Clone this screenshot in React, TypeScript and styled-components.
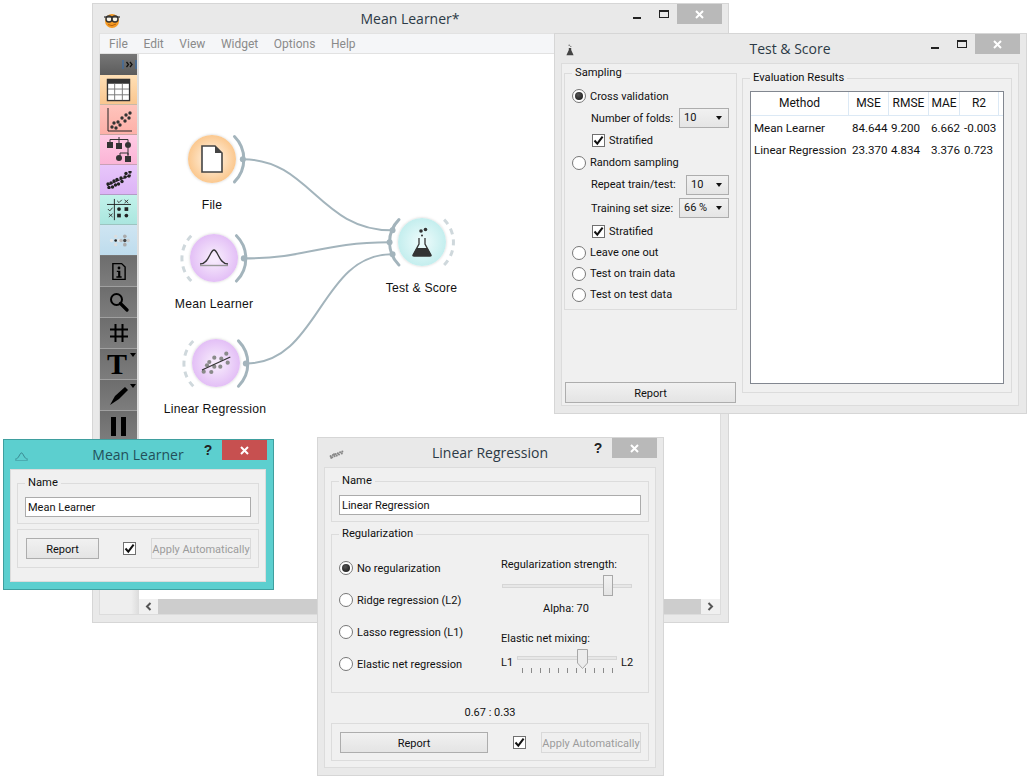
import React from "react";
import styled, { createGlobalStyle } from "styled-components";

const Global = createGlobalStyle`
  html, body { margin: 0; padding: 0; background: #fff; }
  body { width: 1030px; height: 779px; overflow: hidden; font-family: Roboto, "Open Sans", sans-serif; font-size: 11px; color: #111; }
  #root { position: relative; width: 1030px; height: 779px; }
`;

const Win = styled.div<{ $x: number; $y: number; $w: number; $h: number; $teal?: boolean }>`
  position: absolute;
  left: ${(p) => p.$x}px;
  top: ${(p) => p.$y}px;
  width: ${(p) => p.$w}px;
  height: ${(p) => p.$h}px;
  box-sizing: border-box;
  display: flex;
  flex-direction: column;
  padding: 0 7px 7px 6px;
  background: ${(p) => (p.$teal ? "#5ccfcf" : "#e9e9e9")};
  border: 1px solid ${(p) => (p.$teal ? "#3f9f9f" : "#d6d6d6")};
`;

const TitleBar = styled.div`
  height: 29px;
  flex: none;
  display: grid;
  grid-template-columns: 1fr auto 1fr;
`;
const TitleIcon = styled.div`
  display: flex;
  align-items: center;
  padding: 2px 0 0 5px;
`;
const TitleText = styled.div<{ $teal?: boolean }>`
  font-family: "Open Sans", sans-serif;
  font-size: 14px;
  line-height: 30px;
  color: ${(p) => (p.$teal ? "#23505a" : "#2c3a46")};
`;
const WinButtons = styled.div`
  display: flex;
  justify-content: flex-end;
  align-items: flex-start;
  margin-right: -1px;
`;
const MinBtn = styled.div`
  width: 8px;
  height: 2px;
  margin-top: 13px;
  margin-right: 18px;
  background: #222;
`;
const MaxBtn = styled.div`
  width: 10px;
  height: 8px;
  margin-top: 6px;
  margin-right: 8px;
  box-sizing: border-box;
  border: 1px solid #222;
  border-top-width: 2px;
`;
const HelpBtn = styled.div`
  font-family: "Liberation Sans", sans-serif;
  font-weight: 700;
  font-size: 14px;
  line-height: 14px;
  width: 10px;
  margin-top: 3px;
  margin-right: 9px;
  color: #222;
  text-align: center;
`;
const CloseBtn = styled.div<{ $red?: boolean }>`
  width: 45px;
  height: 20px;
  display: flex;
  align-items: center;
  justify-content: center;
  background: ${(p) => (p.$red ? "#c75050" : "#b9b9b9")};
`;

const Panel = styled.div`
  flex: 1;
  min-height: 0;
  box-sizing: border-box;
  background: #f0f0f0;
  border: 1px solid #dcdcdc;
`;
const PanelRow = styled(Panel)`
  display: flex;
  gap: 5px;
  padding: 2px 6px 2px 2px;
`;
const PanelCol = styled(Panel)`
  display: flex;
  flex-direction: column;
  padding: 6px 6px 0;
`;

const Group = styled.fieldset<{ $h: number; $mt?: number; $pad?: string }>`
  margin: ${(p) => p.$mt ?? 0}px 0 0;
  min-width: 0;
  height: ${(p) => p.$h}px;
  box-sizing: border-box;
  flex: none;
  padding: ${(p) => p.$pad ?? "7px"};
  border: 1px solid #dcdcdc;
  display: flex;
  flex-direction: column;
`;
const Legend = styled.legend`
  padding: 0 3px;
  height: 14px;
  line-height: 14px;
  font-size: 11.2px;
`;
const PlainBox = styled.div<{ $h: number; $mt: number }>`
  height: ${(p) => p.$h}px;
  margin-top: ${(p) => p.$mt}px;
  box-sizing: border-box;
  flex: none;
  border: 1px solid #dcdcdc;
  padding: 0 8px;
  display: flex;
  align-items: center;
`;

const TextInput = styled.div`
  height: 20px;
  box-sizing: border-box;
  border: 1px solid #ababab;
  background: #fff;
  padding-left: 2px;
  line-height: 20px;
  flex: none;
`;
const Button = styled.div<{ $w: number; $ml?: number }>`
  width: ${(p) => p.$w}px;
  height: 21px;
  flex: none;
  margin-left: ${(p) => p.$ml ?? 0}px;
  box-sizing: border-box;
  border: 1px solid #adadad;
  background: linear-gradient(#f1f1f1, #e4e4e4);
  text-align: center;
  line-height: 21px;
  white-space: nowrap;
`;
const DisabledButton = styled(Button)`
  border-color: #d9d9d9;
  background: #efefef;
  color: #9c9c9c;
`;

const CheckBox = styled.div<{ $ml?: number }>`
  width: 13px;
  height: 13px;
  flex: none;
  margin-left: ${(p) => p.$ml ?? 0}px;
  box-sizing: border-box;
  border: 1px solid #707070;
  background: #fff;
  display: flex;
  align-items: center;
  justify-content: center;
`;
const Check = ({ ml }: { ml?: number }) => (
  <CheckBox $ml={ml}>
    <svg width="11" height="11" viewBox="0 0 11 11">
      <path d="M1.5 5.5 L4.3 8.6 L9.6 1.6" fill="none" stroke="#111" strokeWidth="2" />
    </svg>
  </CheckBox>
);

const RadioCircle = styled.div<{ $on?: boolean }>`
  width: 14px;
  height: 14px;
  flex: none;
  box-sizing: border-box;
  border-radius: 50%;
  border: 1px solid #777;
  background: #fff;
  display: flex;
  align-items: center;
  justify-content: center;
  &::after {
    content: "";
    display: ${(p) => (p.$on ? "block" : "none")};
    width: 8px;
    height: 8px;
    border-radius: 50%;
    background: radial-gradient(circle at 40% 35%, #555, #111);
  }
`;
const Row = styled.div<{ $h: number; $ml?: number; $gap?: number; $between?: boolean }>`
  height: ${(p) => p.$h}px;
  flex: none;
  box-sizing: border-box;
  padding-top: 2px;
  margin-left: ${(p) => p.$ml ?? 0}px;
  display: flex;
  align-items: center;
  white-space: nowrap;
  gap: ${(p) => p.$gap ?? 4}px;
  justify-content: ${(p) => (p.$between ? "space-between" : "flex-start")};
`;
const Radio = ({ h, on, children, gap }: { h: number; on?: boolean; children: React.ReactNode; gap?: number }) => (
  <Row $h={h} $gap={gap ?? 4}>
    <RadioCircle $on={on} />
    <span>{children}</span>
  </Row>
);

const ComboBox = styled.div<{ $w: number }>`
  width: ${(p) => p.$w}px;
  height: 20px;
  flex: none;
  box-sizing: border-box;
  border: 1px solid #adadad;
  background: linear-gradient(#f1f1f1, #e5e5e5);
  padding-left: 4px;
  line-height: 18px;
  position: relative;
  &::after {
    content: "";
    position: absolute;
    right: 6px;
    top: 7px;
    border-style: solid;
    border-width: 4px 3.5px 0;
    border-color: #111 transparent transparent;
  }
`;

const LeftCol = styled.div`
  width: 173px;
  flex: none;
  display: flex;
  flex-direction: column;
  justify-content: space-between;
`;
const RightCol = styled.div`
  flex: 1;
  min-width: 0;
  padding-top: 5px;
`;
const ResultsTable = styled.div`
  flex: 1;
  box-sizing: border-box;
  border: 1px solid #828790;
  background: #fff;
`;
const TableGrid = styled.div`
  display: grid;
  grid-template-columns: 98px 40px 40px 31px 39px;
`;
const HeaderStrip = styled(TableGrid)`
  height: 23px;
  border-bottom: 1px solid #dce9f5;
  margin-bottom: 1px;
`;
const HeadCell = styled.div`
  box-sizing: border-box;
  border-right: 1px solid #dce9f5;
  text-align: center;
  line-height: 23px;
  font-size: 12px;
`;
const Cell = styled.div<{ $pl: number }>`
  padding-left: ${(p) => p.$pl}px;
  height: 22px;
  line-height: 22px;
  white-space: nowrap;
  font-size: 11.6px;
`;

/* main window */
const MenuBar = styled.div`
  height: 21px;
  flex: none;
  display: flex;
  align-items: center;
  gap: 15.6px;
  padding-left: 9px;
  background: #f5f6f8;
  border: 1px solid #e2e2e2;
  box-sizing: border-box;
  color: #8a8a8a;
  font-size: 12px;
`;
const MainBody = styled.div`
  flex: 1;
  min-height: 0;
  display: flex;
  border-left: 1px solid #dcdcdc;
  border-right: 1px solid #dcdcdc;
  border-bottom: 1px solid #dcdcdc;
`;
const Dock = styled.div`
  width: 39px;
  flex: none;
  box-sizing: border-box;
  display: flex;
  flex-direction: column;
  background: linear-gradient(90deg, #eeeeee 80%, #dcdcdc);
  padding-right: 2px;
`;
const DockHead = styled.div`
  height: 21px;
  flex: none;
  background: linear-gradient(#777, #5c5c5c);
  display: flex;
  justify-content: flex-end;
`;
const Tool = styled.div<{ $top: string; $bottom: string; $h: number; $line: string }>`
  height: ${(p) => p.$h}px;
  flex: none;
  box-sizing: border-box;
  display: flex;
  align-items: center;
  justify-content: center;
  background: linear-gradient(${(p) => p.$top}, ${(p) => p.$bottom});
  border-bottom: 1px solid ${(p) => p.$line};
`;
const CanvasCol = styled.div`
  flex: 1;
  min-width: 0;
  display: flex;
  flex-direction: column;
`;
const Canvas = styled.div`
  flex: 1;
  min-height: 0;
  position: relative;
  background: #fff;
`;
const Links = styled.svg`
  position: absolute;
  inset: 0;
  width: 100%;
  height: 100%;
`;
const HScroll = styled.div`
  height: 15px;
  flex: none;
  display: flex;
  background: #f0f0f0;
`;
const ScrollArrow = styled.div`
  width: 19px;
  flex: none;
  display: flex;
  align-items: center;
  justify-content: center;
`;
const ScrollThumb = styled.div`
  flex: 1;
  background: #cdcdcd;
`;

const Node = styled.div<{ $cx: number; $cy: number }>`
  position: absolute;
  left: ${(p) => p.$cx - 139 - 70}px;
  top: ${(p) => p.$cy - 55 - 24}px;
  width: 140px;
  display: flex;
  flex-direction: column;
  align-items: center;
`;
const NodeDisc = styled.div<{ $inner: string; $outer: string }>`
  width: 48px;
  height: 48px;
  border-radius: 50%;
  display: flex;
  align-items: center;
  justify-content: center;
  background: radial-gradient(circle closest-side, ${(p) => p.$inner} 15%, ${(p) => p.$outer} 100%);
  box-shadow: 0 0 2px 1px rgba(120, 120, 120, 0.18);
`;
const NodeLabel = styled.div<{ $dx?: number }>`
  margin-top: 15px;
  margin-left: ${(p) => p.$dx ?? 0}px;
  font-family: "Liberation Sans", Arial, sans-serif;
  font-size: 12.2px;
  letter-spacing: 0.2px;
  line-height: 15px;
  white-space: nowrap;
  color: #111;
`;

/* Linear Regression window */
const RegColumns = styled.div`
  display: flex;
  padding-top: 4px;
`;
const RadioStack = styled.div`
  width: 162px;
  flex: none;
  padding-top: 6px;
`;
const SliderStack = styled.div`
  flex: 1;
  padding-top: 13px;
`;
const Caption = styled.div<{ $mt?: number; $center?: boolean }>`
  line-height: 14px;
  height: 14px;
  white-space: nowrap;
  margin-top: ${(p) => p.$mt ?? 0}px;
  text-align: ${(p) => (p.$center ? "center" : "left")};
`;
const CaptionBlock = styled(Caption)`
  width: 130px;
`;
const SliderBox = styled.div<{ $w: number; $mt: number; $ml?: number }>`
  position: relative;
  width: ${(p) => p.$w}px;
  height: 21px;
  margin-top: ${(p) => p.$mt}px;
  margin-left: ${(p) => p.$ml ?? 0}px;
  flex: none;
  display: flex;
  align-items: center;
`;
const Track = styled.div`
  width: 100%;
  height: 4px;
  box-sizing: border-box;
  border: 1px solid #d6d6d6;
  background: #e7e7e7;
`;
const Handle = styled.div<{ $l: number }>`
  position: absolute;
  left: ${(p) => p.$l}px;
  top: 0;
  width: 10px;
  height: 21px;
  box-sizing: border-box;
  border: 1px solid #a8a8a8;
  background: linear-gradient(#f2f2f2, #e4e4e4);
`;
const MixRow = styled.div`
  display: flex;
  align-items: flex-start;
  margin-top: 3px;
  height: 26px;
`;
const MixLabel = styled.span<{ $ml?: number }>`
  width: ${(p) => (p.$ml ? "auto" : "16px")};
  margin-left: ${(p) => p.$ml ?? 0}px;
  margin-top: 7px;
  line-height: 14px;
`;
const MixSlider = styled.div`
  position: relative;
  width: 100px;
  height: 26px;
  flex: none;
`;
const MixTrack = styled.div`
  position: absolute;
  left: 0;
  right: 0;
  top: 7px;
  height: 4px;
  box-sizing: border-box;
  border: 1px solid #d6d6d6;
  background: #e7e7e7;
`;
const MixHandle = styled.svg`
  position: absolute;
  left: 60px;
  top: 0;
`;
const Ticks = styled.div`
  position: absolute;
  left: 5px;
  top: 19px;
  width: 91px;
  display: flex;
  justify-content: space-between;
`;
const Tick = styled.div`
  width: 1px;
  height: 5px;
  background: #8a8a8a;
`;

const X = () => (
  <svg width="11" height="11" viewBox="0 0 11 11">
    <path d="M2 2 L9 9 M9 2 L2 9" stroke="#fff" strokeWidth="2" />
  </svg>
);

const SmallGauss = ({ c = "#356" }: { c?: string }) => (
  <svg width="13" height="9" viewBox="0 0 14 10">
    <path d="M0 8 C4 8 5 1 7 1 C9 1 10 8 14 8" fill="none" stroke={c} strokeWidth="1" />
    <path d="M0 9.5 H14" stroke={c} strokeWidth="1" opacity=".5" />
  </svg>
);
const SmallFlask = () => (
  <svg width="8" height="14" viewBox="0 0 10 15">
    <circle cx="4" cy="1.5" r="1" fill="#777" />
    <circle cx="6" cy="3" r=".8" fill="#777" />
    <path d="M3.5 5 H6.5 V7.5 L9.5 14 H.5 L3.5 7.5 Z" fill="#444" />
  </svg>
);
const scatterDots: [number, number][] = [
  [3, 11], [6, 13], [7, 9], [10, 11], [12, 7], [14, 10], [16, 6], [18, 8], [20, 4], [23, 6], [24, 2.5], [4, 14], [9, 7.5],
];
const SmallReg = () => (
  <svg width="15" height="9" viewBox="0 0 27 16">
    {scatterDots.map(([x, y], i) => (
      <circle key={i} cx={x} cy={y} r="1.9" fill="#888" />
    ))}
  </svg>
);
const OrangeLogo = () => (
  <svg width="16" height="15" viewBox="0 0 16 15">
    <circle cx="8" cy="8" r="7" fill="#f59a23" />
    <path d="M4 11.5 Q8 14 12 11" stroke="#b8620c" fill="none" />
    <circle cx="5" cy="6" r="3" fill="#f8f4e8" stroke="#333" strokeWidth="1.4" />
    <circle cx="11" cy="6" r="3" fill="#f8f4e8" stroke="#333" strokeWidth="1.4" />
    <path d="M0 4 H16" stroke="#333" strokeWidth="1.2" />
  </svg>
);

const TableIcon = () => (
  <svg width="25" height="24" viewBox="0 0 26 25">
    <rect x="1.5" y="1.5" width="23" height="22" fill="#fff" stroke="#333" strokeWidth="1.4" />
    <rect x="1" y="1" width="24" height="5" fill="#333" />
    <path d="M9 6 V23 M17 6 V23 M2 11.5 H24 M2 17.5 H24" stroke="#777" strokeWidth="1" />
  </svg>
);
const ScatterIcon = () => (
  <svg width="26" height="26" viewBox="0 0 26 26">
    <path d="M2 1 V24 H26" fill="none" stroke="#222" strokeWidth="1" />
    {[[6, 20], [10, 21], [8, 16], [12, 15], [14, 18], [16, 11], [19, 14], [20, 8], [24, 6], [23, 11]].map(([x, y], i) => (
      <circle key={i} cx={x} cy={y} r="1.7" fill="#333" />
    ))}
  </svg>
);
const TreeIcon = () => (
  <svg width="26" height="27" viewBox="0 0 26 27">
    <path d="M4 6 V3.5 H22 V6 M13 1 V8 M22 12 V19 M14 17 H22 V21 M14 17 V20" fill="none" stroke="#333" />
    <rect x="1" y="6" width="6" height="6" fill="#333" />
    <rect x="10" y="7" width="6" height="6" fill="#333" />
    <circle cx="22" cy="9" r="3" fill="#333" />
    <circle cx="13" cy="22" r="3" fill="#333" />
    <rect x="19" y="20" width="6" height="6" fill="#333" />
  </svg>
);
const RegIcon = () => (
  <svg width="26" height="18" viewBox="0 0 26 18">
    {[[2, 13], [3, 16.5], [5, 12], [6.5, 16], [8, 10], [9.5, 14], [11, 8.5], [12.5, 13], [15, 7], [16, 10.5], [19, 6], [20, 2.5], [23, 5], [24, 1]].map(([x, y], i) => (
      <circle key={i} cx={x} cy={y} r="1.7" fill="#222" />
    ))}
    <path d="M1 14.5 L25 4" stroke="#222" strokeWidth="1" />
  </svg>
);
const GridIcon = () => (
  <svg width="24" height="24" viewBox="0 0 26 24">
    <path d="M8 0 V23 M0 6 H26" stroke="#222" strokeWidth="1" />
    <path d="M11 2 L13 4 L16 1" stroke="#333" fill="none" />
    <path d="M19 1 L23 4.5 M23 1 L19 4.5" stroke="#333" />
    <path d="M1 11 L3 13 L6 9.5" stroke="#333" fill="none" />
    <path d="M2 16 L6 19.5 M6 16 L2 19.5" stroke="#333" />
    <circle cx="13" cy="11" r="2" fill="#222" />
    <rect x="19" y="9" width="4" height="4" fill="#222" />
    <rect x="11" y="16" width="4" height="4" fill="#222" />
    <circle cx="21" cy="18" r="2" fill="#222" />
  </svg>
);
const BlurDots = () => (
  <svg width="22" height="15" viewBox="0 0 26 18">
    <circle cx="9" cy="4" r="2" fill="#ddd" />
    <circle cx="4" cy="9" r="2" fill="#e6e6e6" />
    <circle cx="13" cy="9" r="2" fill="#e6e6e6" />
    <circle cx="9" cy="14" r="2" fill="#ddd" />
    <circle cx="9" cy="9" r="1.6" fill="#222" />
    <circle cx="20" cy="4" r="2.2" fill="#aaa" />
    <circle cx="15.5" cy="9" r="2.2" fill="#bbb" />
    <circle cx="24" cy="9" r="2" fill="#ccc" />
    <circle cx="20" cy="14" r="2.2" fill="#aaa" />
    <circle cx="20" cy="9" r="2" fill="#444" />
  </svg>
);
const InfoIcon = () => (
  <svg width="14" height="19" viewBox="0 0 16 20">
    <path d="M1 1 H11 L15 5 V19 H1 Z" fill="none" stroke="#000" strokeWidth="1.6" />
    <circle cx="8" cy="6" r="1.6" fill="#000" />
    <path d="M5.5 9 H9.5 V15.5 H11 V17 H5 V15.5 H7 V10.5 H5.5 Z" fill="#000" />
  </svg>
);
const LensIcon = () => (
  <svg width="20" height="20" viewBox="0 0 20 20">
    <circle cx="7.5" cy="7.5" r="5.5" fill="none" stroke="#000" strokeWidth="2" />
    <path d="M11.5 11.5 L18 18" stroke="#000" strokeWidth="3.2" strokeLinecap="round" />
  </svg>
);
const HashIcon = () => (
  <svg width="18" height="18" viewBox="0 0 18 18">
    <path d="M5.5 0 V18 M12.5 0 V18 M0 5.5 H18 M0 12.5 H18" stroke="#000" strokeWidth="2" />
  </svg>
);
const Caret = styled.div`
  position: absolute;
  right: 1px;
  top: 4px;
  border-style: solid;
  border-width: 4px 3.5px 0;
  border-color: #000 transparent transparent;
`;
const ToolInner = styled.div`
  position: relative;
  width: 100%;
  height: 100%;
  display: flex;
  align-items: center;
  justify-content: center;
`;
const BigT = styled.span`
  font-family: "Liberation Serif", serif;
  font-weight: 700;
  font-size: 30px;
  line-height: 30px;
  color: #000;
  margin-right: 3px;
`;
const PenIcon = () => (
  <svg width="20" height="22" viewBox="0 0 20 22">
    <path d="M16 3 L19 6 L10 15 L1 21 L6 12 Z" fill="#000" />
  </svg>
);
const PauseIcon = () => (
  <svg width="16" height="19" viewBox="0 0 16 19">
    <rect x="0" y="0" width="5" height="19" fill="#000" />
    <rect x="10" y="0" width="5" height="19" fill="#000" />
  </svg>
);

const tools = [
  { t: "#ffe0b6", b: "#f9c68f", l: "#c9b9a5", h: 30, i: <TableIcon /> },
  { t: "#ffc4bc", b: "#fdb0a8", l: "#c9a5a0", h: 30, i: <ScatterIcon /> },
  { t: "#ffcbe4", b: "#fbb4d6", l: "#c9a0b6", h: 30, i: <TreeIcon /> },
  { t: "#e8c6fb", b: "#dcb4f6", l: "#b49ac6", h: 30, i: <RegIcon /> },
  { t: "#c2f2ea", b: "#aae6df", l: "#9cc4c0", h: 30, i: <GridIcon /> },
  { t: "#cfe5f2", b: "#bedced", l: "#777", h: 31, i: <BlurDots /> },
  { t: "#6d6d6d", b: "#7d7d7d", l: "#a0a0a0", h: 31, i: <InfoIcon /> },
  { t: "#6d6d6d", b: "#7d7d7d", l: "#a0a0a0", h: 31, i: <LensIcon /> },
  { t: "#6d6d6d", b: "#7d7d7d", l: "#a0a0a0", h: 31, i: <HashIcon /> },
  { t: "#6d6d6d", b: "#7d7d7d", l: "#a0a0a0", h: 31, i: <ToolInner><BigT>T</BigT><Caret /></ToolInner> },
  { t: "#6d6d6d", b: "#7d7d7d", l: "#a0a0a0", h: 31, i: <ToolInner><PenIcon /><Caret /></ToolInner> },
  { t: "#6d6d6d", b: "#7d7d7d", l: "#a0a0a0", h: 31, i: <PauseIcon /> },
];

const STEEL = "#a3b4bc";
const FAINT = "#cfd8dc";

const arc = (cx: number, cy: number, r: number, from: number, to: number) => {
  const a = (from * Math.PI) / 180;
  const b = (to * Math.PI) / 180;
  return `M${cx + r * Math.cos(a)} ${cy + r * Math.sin(a)} A${r} ${r} 0 0 1 ${cx + r * Math.cos(b)} ${cy + r * Math.sin(b)}`;
};

const CanvasLinks = () => (
  <Links viewBox="139 55 582 544" preserveAspectRatio="none">
    <g fill="none" stroke={STEEL} strokeWidth="2">
      <path d="M243 160 C310 160 320 231 392 231" />
      <path d="M244 259 C310 259 320 243 390 243" />
      <path d="M246 364 C320 364 320 255 392 255" />
    </g>
    <g fill="none" stroke={STEEL} strokeWidth="3" strokeLinecap="round">
      <path d={arc(212, 160, 32, -45, 45)} />
      <path d={arc(214, 259, 32, -45, 45)} />
      <path d={arc(216, 364, 32, -45, 45)} />
      <path d={arc(422, 243, 32, 135, 225)} />
    </g>
    <g fill={STEEL}>
      <circle cx="243" cy="160" r="3" />
      <circle cx="244" cy="259" r="3" />
      <circle cx="246" cy="364" r="3" />
      <circle cx="393" cy="231" r="3" />
      <circle cx="390" cy="243" r="3" />
      <circle cx="393" cy="255" r="3" />
    </g>
    <g fill="none" stroke={FAINT} strokeWidth="3" strokeDasharray="6 5">
      <path d={arc(214, 259, 32, 135, 225)} />
      <path d={arc(216, 364, 32, 135, 225)} />
      <path d={arc(422, 243, 32, -45, 45)} />
    </g>
  </Links>
);

const ORANGE = { $inner: "#fff1df", $outer: "#fbc88f" };
const PURPLE = { $inner: "#f6e9fc", $outer: "#e3bff6" };
const TEAL = { $inner: "#e9fafa", $outer: "#c4eeee" };

const FileIcon = () => (
  <svg width="22" height="28" viewBox="0 0 22 28">
    <path d="M1 1 H14 L21 8 V27 H1 Z" fill="#fff" stroke="#444" strokeWidth="1.6" />
    <path d="M14 1 L21 8 H14 Z" fill="#444" />
  </svg>
);
const GaussIcon = () => (
  <svg width="30" height="18" viewBox="0 0 30 18">
    <path d="M1 15 C10 15 11 1 15 1 C19 1 20 15 29 15" fill="none" stroke="#333" strokeWidth="1.3" />
    <path d="M1 16.5 H29" stroke="#999" strokeWidth="1.4" />
  </svg>
);
const LinRegIcon = () => (
  <svg width="30" height="24" viewBox="0 0 30 24">
    {[[2.7, 20.7], [6, 14.3], [8.3, 11], [10.3, 21], [13.3, 6.7], [13.3, 15.7], [19.3, 15.7], [20.3, 7.7], [25.3, 2.7], [26.7, 11.7]].map(([x, y], i) => (
      <circle key={i} cx={x} cy={y} r="2.1" fill="#8a8a8a" />
    ))}
    <path d="M1 19 L29.3 6" stroke="#333" strokeWidth="1.2" />
  </svg>
);
const TestFlask = () => (
  <svg width="20" height="30" viewBox="0 0 20 30">
    <circle cx="9" cy="4" r="1.8" fill="#333" />
    <circle cx="13.5" cy="2.5" r="1.8" fill="#333" />
    <circle cx="10" cy="8.5" r="1" fill="#333" />
    <path d="M7 11 V17 L1 28 Q.6 29 2 29 H18 Q19.4 29 19 28 L13 17 V11" fill="none" stroke="#333" strokeWidth="1.3" />
    <path d="M4.5 21 H15.5 L19 28 Q19.4 29 18 29 H2 Q.6 29 1 28 Z" fill="#333" />
  </svg>
);

const MainWindow = () => (
  <Win $x={92} $y={3} $w={637} $h={620}>
    <TitleBar>
      <TitleIcon><OrangeLogo /></TitleIcon>
      <TitleText>Mean Learner*</TitleText>
      <WinButtons><MinBtn /><MaxBtn /><CloseBtn><X /></CloseBtn></WinButtons>
    </TitleBar>
    <MenuBar>
      {["File", "Edit", "View", "Widget", "Options", "Help"].map((m) => (
        <span key={m}>{m}</span>
      ))}
    </MenuBar>
    <MainBody>
      <Dock>
        <DockHead>
          <svg width="15" height="21" viewBox="0 0 15 21">
            <path d="M1 6 V15 M14 6 V15" stroke="#2d6fb8" strokeWidth="1" />
            <path d="M4.5 8 L6.5 10.5 L4.5 13 M8 8 L10 10.5 L8 13" fill="none" stroke="#111" strokeWidth="1.3" />
          </svg>
        </DockHead>
        {tools.map((t, i) => (
          <Tool key={i} $top={t.t} $bottom={t.b} $line={t.l} $h={t.h}>{t.i}</Tool>
        ))}
      </Dock>
      <CanvasCol>
        <Canvas>
          <CanvasLinks />
          <Node $cx={212} $cy={160}>
            <NodeDisc {...ORANGE}><FileIcon /></NodeDisc>
            <NodeLabel>File</NodeLabel>
          </Node>
          <Node $cx={214} $cy={259}>
            <NodeDisc {...PURPLE}><GaussIcon /></NodeDisc>
            <NodeLabel>Mean Learner</NodeLabel>
          </Node>
          <Node $cx={216} $cy={364}>
            <NodeDisc {...PURPLE}><LinRegIcon /></NodeDisc>
            <NodeLabel $dx={-2}>Linear Regression</NodeLabel>
          </Node>
          <Node $cx={422} $cy={243}>
            <NodeDisc {...TEAL}><TestFlask /></NodeDisc>
            <NodeLabel $dx={-1}>Test &amp; Score</NodeLabel>
          </Node>
        </Canvas>
        <HScroll>
          <ScrollArrow>
            <svg width="7" height="9" viewBox="0 0 7 9"><path d="M5.5 1 L2 4.5 L5.5 8" fill="none" stroke="#555" strokeWidth="2" /></svg>
          </ScrollArrow>
          <ScrollThumb />
          <ScrollArrow>
            <svg width="7" height="9" viewBox="0 0 7 9"><path d="M1.5 1 L5 4.5 L1.5 8" fill="none" stroke="#555" strokeWidth="2" /></svg>
          </ScrollArrow>
        </HScroll>
      </CanvasCol>
    </MainBody>
  </Win>
);

const results = [
  ["Mean Learner", "84.644", "9.200", "6.662", "-0.003"],
  ["Linear Regression", "23.370", "4.834", "3.376", "0.723"],
];
const pads = [3, 3, 2, 2, 4];

const TestWindow = () => (
  <Win $x={554} $y={33} $w={473} $h={381}>
    <TitleBar>
      <TitleIcon><SmallFlask /></TitleIcon>
      <TitleText>Test &amp; Score</TitleText>
      <WinButtons><MinBtn /><MaxBtn /><CloseBtn><X /></CloseBtn></WinButtons>
    </TitleBar>
    <PanelRow>
      <LeftCol>
        <Group $h={244} $pad="4px 7px 0">
          <Legend>Sampling</Legend>
          <Radio h={22} on>Cross validation</Radio>
          <Row $h={22} $ml={19} $between><span>Number of folds:</span><ComboBox $w={50}>10</ComboBox></Row>
          <Row $h={23} $ml={20}><Check /><span>Stratified</span></Row>
          <Radio h={21}>Random sampling</Radio>
          <Row $h={23} $ml={19} $between><span>Repeat train/test:</span><ComboBox $w={43}>10</ComboBox></Row>
          <Row $h={24} $ml={19} $between><span>Training set size:</span><ComboBox $w={50}>66 %</ComboBox></Row>
          <Row $h={22} $ml={20}><Check /><span>Stratified</span></Row>
          <Radio h={21}>Leave one out</Radio>
          <Radio h={21}>Test on train data</Radio>
          <Radio h={21}>Test on test data</Radio>
        </Group>
        <Button $w={171} $ml={1}>Report</Button>
      </LeftCol>
      <RightCol>
        <Group $h={322} $pad="6px 7px 8px">
          <Legend>Evaluation Results</Legend>
          <ResultsTable>
            <HeaderStrip>
              {["Method", "MSE", "RMSE", "MAE", "R2"].map((h) => (
                <HeadCell key={h}>{h}</HeadCell>
              ))}
            </HeaderStrip>
            {results.map((r) => (
              <TableGrid key={r[0]}>
                {r.map((c, i) => (
                  <Cell key={c} $pl={pads[i]}>{c}</Cell>
                ))}
              </TableGrid>
            ))}
          </ResultsTable>
        </Group>
      </RightCol>
    </PanelRow>
  </Win>
);

const MeanWindow = () => (
  <Win $x={3} $y={439} $w={271} $h={151} $teal>
    <TitleBar>
      <TitleIcon><SmallGauss c="#37808a" /></TitleIcon>
      <TitleText $teal>Mean Learner</TitleText>
      <WinButtons><HelpBtn>?</HelpBtn><CloseBtn $red><X /></CloseBtn></WinButtons>
    </TitleBar>
    <PanelCol>
      <Group $h={48}>
        <Legend>Name</Legend>
        <TextInput>Mean Learner</TextInput>
      </Group>
      <PlainBox $h={39} $mt={5}>
        <Button $w={73}>Report</Button>
        <Check ml={24} />
        <DisabledButton $w={100} $ml={15}>Apply Automatically</DisabledButton>
      </PlainBox>
    </PanelCol>
  </Win>
);

const LinearWindow = () => (
  <Win $x={317} $y={437} $w={347} $h={339}>
    <TitleBar>
      <TitleIcon><SmallReg /></TitleIcon>
      <TitleText>Linear Regression</TitleText>
      <WinButtons><HelpBtn>?</HelpBtn><CloseBtn><X /></CloseBtn></WinButtons>
    </TitleBar>
    <PanelCol>
      <Group $h={48}>
        <Legend>Name</Legend>
        <TextInput>Linear Regression</TextInput>
      </Group>
      <Group $h={166} $mt={5} $pad="0 7px">
        <Legend>Regularization</Legend>
        <RegColumns>
          <RadioStack>
            <Radio h={32} on>No regularization</Radio>
            <Radio h={32}>Ridge regression (L2)</Radio>
            <Radio h={32}>Lasso regression (L1)</Radio>
            <Radio h={32}>Elastic net regression</Radio>
          </RadioStack>
          <SliderStack>
            <Caption>Regularization strength:</Caption>
            <SliderBox $w={130} $mt={3} $ml={1}>
              <Track />
              <Handle $l={101} />
            </SliderBox>
            <CaptionBlock $mt={6} $center>Alpha: 70</CaptionBlock>
            <Caption $mt={16}>Elastic net mixing:</Caption>
            <MixRow>
              <MixLabel>L1</MixLabel>
              <MixSlider>
                <MixTrack />
                <MixHandle width="11" height="20" viewBox="0 0 11 20">
                  <path d="M.5 .5 H10.5 V14 L5.5 19.5 L.5 14 Z" fill="#ececec" stroke="#a8a8a8" />
                </MixHandle>
                <Ticks>
                  {Array.from({ length: 11 }).map((_, i) => <Tick key={i} />)}
                </Ticks>
              </MixSlider>
              <MixLabel $ml={4}>L2</MixLabel>
            </MixRow>
          </SliderStack>
        </RegColumns>
      </Group>
      <Caption $mt={13} $center>0.67 : 0.33</Caption>
      <PlainBox $h={38} $mt={3}>
        <Button $w={148}>Report</Button>
        <Check ml={25} />
        <DisabledButton $w={100} $ml={15}>Apply Automatically</DisabledButton>
      </PlainBox>
    </PanelCol>
  </Win>
);

export default function App() {
  return (
    <>
      <Global />
      <MainWindow />
      <TestWindow />
      <MeanWindow />
      <LinearWindow />
    </>
  );
}
